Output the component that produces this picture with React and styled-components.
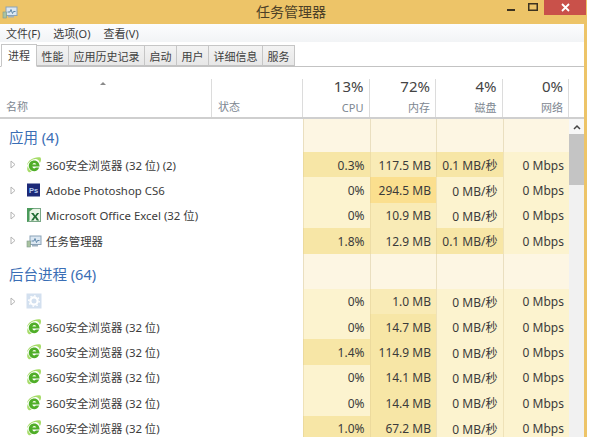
import React from "react";
import styled, { createGlobalStyle } from "styled-components";

const Global = createGlobalStyle`
  html, body { margin: 0; padding: 0; background: #fff; }
  #root { width: 591px; height: 437px; overflow: hidden; }
`;

const Frame = styled.div`
  width: 591px;
  height: 437px;
  box-sizing: border-box;
  padding-right: 4px;
  overflow: hidden;
  display: flex;
  flex-direction: column;
  background: #fff;
  font-family: "Noto Sans", "Noto Sans CJK SC", sans-serif;
  color: #333;
`;

const TitleBar = styled.div`
  height: 24px;
  flex: none;
  box-sizing: border-box;
  background: #edc468;
  position: relative;
  display: flex;
  align-items: center;
  justify-content: center;
  font-size: 14px;
  color: #4c4027;
  padding: 0 5px 3px 0;
`;

const AppIconWrap = styled.span`
  position: absolute;
  left: 2px;
  top: 4px;
  display: flex;
`;

const WinButtons = styled.div`
  position: absolute;
  top: 0;
  right: 1px;
  display: flex;
  height: 15px;
`;

const WinButton = styled.div`
  width: ${({ $w }) => $w}px;
  height: 15px;
  background: ${({ $close }) => ($close ? "#c9514a" : "transparent")};
  display: flex;
  align-items: center;
  justify-content: center;
`;

const Body = styled.div`
  flex: 1;
  min-height: 0;
  border-right: 3px solid #edc468;
  display: flex;
  flex-direction: column;
  overflow: hidden;
`;

const MenuBar = styled.div`
  height: 18px;
  flex: none;
  background: linear-gradient(#fcfdfe, #f2f4f6);
  display: flex;
  align-items: center;
  gap: 13px;
  padding-left: 6px;
  font-size: 11px;
  color: #3c3c3c;
`;

const TabBar = styled.div`
  height: 25px;
  flex: none;
  box-sizing: border-box;
  display: flex;
  align-items: flex-end;
  padding-left: 1px;
  background: #fff;
  border-bottom: 1px solid #c3c3c3;
`;

const Tab = styled.div`
  box-sizing: border-box;
  height: ${({ $active }) => ($active ? 23 : 21)}px;
  margin-bottom: ${({ $active }) => ($active ? -1 : 0)}px;
  padding: ${({ $active }) => ($active ? "0 6px 2px" : "0 4.5px")};
  display: flex;
  align-items: center;
  font-size: 11px;
  color: #404040;
  background: ${({ $active }) => ($active ? "#fff" : "linear-gradient(#f3f3f3, #e7e7e7)")};
  border: 1px solid #c6c6c6;
  border-left-width: ${({ $active }) => ($active ? 1 : 0)}px;
  border-bottom-color: ${({ $active }) => ($active ? "#fff" : "#c3c3c3")};
`;

const HeaderRow = styled.div`
  height: 52px;
  flex: none;
  box-sizing: border-box;
  display: grid;
  grid-template-columns: 212px 91px repeat(4, 66.5px) 1fr;
  border-bottom: 2px solid #cfcfcf;
  padding-top: 12px;
`;

const HeadCell = styled.div`
  position: relative;
  border-right: ${({ $plain }) => ($plain ? "none" : "1px solid #dcdcdc")};
  display: flex;
  flex-direction: ${({ $num }) => ($num ? "column" : "row")};
  align-items: flex-end;
  padding: ${({ $num }) => ($num ? "0 5px 0 0" : "0 0 3px 6px")};
  font-size: 11px;
  color: #7d8791;
`;

const SortArrow = styled.span`
  position: absolute;
  left: 100px;
  top: 3px;
  width: 0;
  height: 0;
  border-left: 3px solid transparent;
  border-right: 3px solid transparent;
  border-bottom: 3px solid #8a8a8a;
`;

const Percent = styled.div`
  font-size: 15px;
  line-height: 19px;
  margin-top: -2px;
  color: #444;
`;

const ColName = styled.div`
  font-size: 11px;
  line-height: 17px;
  margin-top: 3px;
`;

const Content = styled.div`
  flex: 1;
  min-height: 0;
  display: flex;
  overflow: hidden;
`;

const Table = styled.div`
  width: 569px;
  flex: none;
  overflow: hidden;
`;

const Group = styled.div`
  height: ${({ $h }) => $h}px;
  display: grid;
  grid-template-columns: 303px repeat(4, 66.5px);
`;

const GroupTitle = styled.div`
  display: flex;
  align-items: center;
  padding: ${({ $top }) => $top}px 0 0 9px;
  font-size: 14.5px;
  color: #3a6eb5;
`;

const EmptyCell = styled.div`
  background: #fdf6e3;
  border-left: 1px solid #eadfc0;
`;

const Row = styled.div`
  height: 25.4px;
  display: grid;
  grid-template-columns: 303px repeat(4, 66.5px);
`;

const NameCell = styled.div`
  display: flex;
  align-items: center;
  padding-left: 10px;
  font-size: 11.4px;
  color: #3b3b3b;
  white-space: nowrap;
`;

const TwistyBox = styled.span`
  width: 16px;
  height: 9px;
  flex: none;
  display: flex;
`;

const IconBox = styled.span`
  width: 16px;
  height: 16px;
  flex: none;
  margin-right: 4px;
  display: flex;
`;

const DataCell = styled.div`
  display: flex;
  align-items: center;
  justify-content: flex-end;
  padding: 1px 5px 0 0;
  font-size: 12px;
  color: #3b3b3b;
  background: ${({ $bg }) => $bg};
  border-left: 1px solid rgba(214, 196, 140, 0.35);
`;

const Scrollbar = styled.div`
  flex: 1;
  background: #f1f1f1;
  display: flex;
  flex-direction: column;
`;

const ScrollUp = styled.div`
  height: 15px;
  flex: none;
  background: #f7f7f7;
  display: flex;
  align-items: center;
  justify-content: center;
`;

const ScrollThumb = styled.div`
  height: 51px;
  flex: none;
  background: #c4c4c4;
`;

const Twisty = () => (
  <svg width="6" height="9" viewBox="0 0 6 9">
    <path d="M1 1 L5 4.5 L1 8Z" fill="#fff" stroke="#b4b4b4" />
  </svg>
);

// 360 browser logo: green "e" with a lighter ring around it
const Ie = () => (
  <svg width="16" height="16" viewBox="0 0 16 16">
    <path d="M1 8.5 C1.5 3.5 8 -0.5 14.5 0.5 C15.5 2.5 15 4.5 13.8 6 C13.3 3.8 12 2.3 10 2.1 C6 1.8 3 5 1 8.5Z" fill="#a6dc68" />
    <path d="M2.6 15 C0.8 13.5 0.8 11 2 8.8 C2.2 11 3.3 13.2 5.6 14.4 C4.5 15.2 3.4 15.4 2.6 15Z" fill="#a6dc68" />
    <path d="M13.2 10.6 C12.4 13 10.4 14.2 8.2 14.2 C5 14.2 2.8 11.8 2.8 8.8 C2.8 5.6 5.2 3.4 8.2 3.4 C11.4 3.4 13.6 5.8 13.6 9.6 H6.4 C6.6 10.8 7.2 11.4 8.2 11.4 C9 11.4 9.5 11.1 9.9 10.6Z" fill="#4fae28" />
    <path d="M6.4 7.6 H10.3 C10 6.4 9.3 5.9 8.3 5.9 C7.3 5.9 6.7 6.4 6.4 7.6Z" fill="#eef9e0" />
  </svg>
);

const Ps = () => (
  <svg width="16" height="16" viewBox="0 0 16 16">
    <rect x="1" y="1.5" width="13" height="13" fill="#1d2a78" />
    <text x="3" y="11" fontSize="7.5" fontWeight="700" fontFamily="Liberation Sans" fill="#b6cdf0">Ps</text>
  </svg>
);

const Excel = () => (
  <svg width="16" height="16" viewBox="0 0 16 16">
    <rect x="1.5" y="1.5" width="13" height="13" fill="#e9f4e6" stroke="#7aa886" />
    <path d="M1 1 L8 1 L3.5 4.5 L3.5 13.5 L1 15Z" fill="#4b9a5b" />
    <path d="M5 6 L7.5 6 L9.2 8.4 L11 6 L13.2 6 L10.4 9.6 L13.2 13.4 L10.8 13.4 L9.1 10.8 L7.4 13.4 L5 13.4 L8 9.6Z" fill="#1f6b33" />
  </svg>
);

const Monitor = () => (
  <svg width="16" height="16" viewBox="0 0 16 16">
    <rect x="4" y="3" width="11" height="8.5" fill="#dbe7f2" stroke="#8ba3b8" />
    <path d="M5.5 8 L8 8 L9 5.5 L10.5 9.5 L11.5 7.5 L13.5 7.5" fill="none" stroke="#5f87a8" />
    <rect x="1" y="8" width="3.5" height="6" fill="#a9c2a0" stroke="#7f9a8c" strokeWidth="0.6" />
    <rect x="6" y="12" width="6" height="1.5" fill="#9fb1c0" />
  </svg>
);

const Gear = () => (
  <svg width="16" height="16" viewBox="0 0 16 16">
    <rect x="0.5" y="0.5" width="15" height="15" fill="#d3e0ef" />
    <circle cx="8" cy="8" r="3.6" fill="none" stroke="#fff" strokeWidth="2.2" />
    <circle cx="8" cy="8" r="5.2" fill="none" stroke="#fff" strokeWidth="1.4" strokeDasharray="1.6 2.4" />
  </svg>
);

const light = "#fcf3cf";
const mid = "#f9ebb6";
const strong = "#f7e6a6";
const hot = "#fbdf8e";

const apps = [
  { icon: <Ie />, name: "360安全浏览器 (32 位) (2)", tw: 1, v: ["0.3%", "117.5 MB", "0.1 MB/秒", "0 Mbps"], bg: [strong, mid, strong, light] },
  { icon: <Ps />, name: "Adobe Photoshop CS6", tw: 1, v: ["0%", "294.5 MB", "0 MB/秒", "0 Mbps"], bg: [light, hot, light, light] },
  { icon: <Excel />, name: "Microsoft Office Excel (32 位)", tw: 1, v: ["0%", "10.9 MB", "0 MB/秒", "0 Mbps"], bg: [light, mid, light, light] },
  { icon: <Monitor />, name: "任务管理器", tw: 1, v: ["1.8%", "12.9 MB", "0.1 MB/秒", "0 Mbps"], bg: [strong, mid, strong, light] },
];

const bgRows = [
  { icon: <Gear />, name: "", tw: 1, v: ["0%", "1.0 MB", "0 MB/秒", "0 Mbps"], bg: [light, mid, light, light] },
  { icon: <Ie />, name: "360安全浏览器 (32 位)", v: ["0%", "14.7 MB", "0 MB/秒", "0 Mbps"], bg: [light, strong, light, light] },
  { icon: <Ie />, name: "360安全浏览器 (32 位)", v: ["1.4%", "114.9 MB", "0 MB/秒", "0 Mbps"], bg: [strong, strong, light, light] },
  { icon: <Ie />, name: "360安全浏览器 (32 位)", v: ["0%", "14.1 MB", "0 MB/秒", "0 Mbps"], bg: [light, strong, light, light] },
  { icon: <Ie />, name: "360安全浏览器 (32 位)", v: ["0%", "14.4 MB", "0 MB/秒", "0 Mbps"], bg: [light, strong, light, light] },
  { icon: <Ie />, name: "360安全浏览器 (32 位)", v: ["1.0%", "67.2 MB", "0 MB/秒", "0 Mbps"], bg: [strong, strong, light, light] },
];

const ProcRow = ({ row }) => (
  <Row>
    <NameCell>
      <TwistyBox>{row.tw && <Twisty />}</TwistyBox>
      <IconBox>{row.icon}</IconBox>
      {row.name}
    </NameCell>
    {row.v.map((val, i) => (
      <DataCell key={i} $bg={row.bg[i]}>{val}</DataCell>
    ))}
  </Row>
);

const GroupRow = ({ title, h, top }) => (
  <Group $h={h}>
    <GroupTitle $top={top}>{title}</GroupTitle>
    <EmptyCell /><EmptyCell /><EmptyCell /><EmptyCell />
  </Group>
);

const tabs = ["进程", "性能", "应用历史记录", "启动", "用户", "详细信息", "服务"];
const cols = [["13%", "CPU"], ["72%", "内存"], ["4%", "磁盘"], ["0%", "网络"]];

export default function App() {
  return (
    <Frame>
      <Global />
      <TitleBar>
        <AppIconWrap><Monitor /></AppIconWrap>
        任务管理器
        <WinButtons>
          <WinButton $w={22}>
            <svg width="8" height="7"><rect width="8" height="2" y="5" fill="#3d3320" /></svg>
          </WinButton>
          <WinButton $w={22}>
            <svg width="10" height="9"><rect x="0.75" y="0.75" width="8.5" height="6.5" fill="none" stroke="#3d3320" strokeWidth="1.5" /></svg>
          </WinButton>
          <WinButton $w={42} $close>
            <svg width="9" height="9"><path d="M1 1 L8 8 M8 1 L1 8" stroke="#fff" strokeWidth="1.8" /></svg>
          </WinButton>
        </WinButtons>
      </TitleBar>
      <Body>
        <MenuBar>
          <span>文件(F)</span>
          <span>选项(O)</span>
          <span>查看(V)</span>
        </MenuBar>
        <TabBar>
          {tabs.map((t, i) => (
            <Tab key={t} $active={i === 0}>{t}</Tab>
          ))}
        </TabBar>
        <HeaderRow>
          <HeadCell><SortArrow />名称</HeadCell>
          <HeadCell>状态</HeadCell>
          {cols.map(([p, n]) => (
            <HeadCell key={n} $num>
              <Percent>{p}</Percent>
              <ColName>{n}</ColName>
            </HeadCell>
          ))}
          <HeadCell $plain />
        </HeaderRow>
        <Content>
          <Table>
            <GroupRow title="应用 (4)" h={33} top={2} />
            {apps.map((r, i) => <ProcRow key={i} row={r} />)}
            <GroupRow title="后台进程 (64)" h={35} top={5} />
            {bgRows.map((r, i) => <ProcRow key={i} row={r} />)}
          </Table>
          <Scrollbar>
            <ScrollUp>
              <svg width="8" height="6"><path d="M1 5 L4 2 L7 5" fill="none" stroke="#444" strokeWidth="1.5" /></svg>
            </ScrollUp>
            <ScrollThumb />
          </Scrollbar>
        </Content>
      </Body>
    </Frame>
  );
}
